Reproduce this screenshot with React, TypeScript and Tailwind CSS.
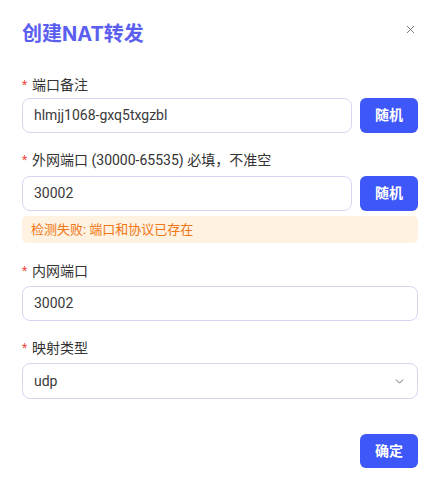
import { X, ChevronDown } from 'lucide-react';

const font = { fontFamily: 'Roboto, "Noto Sans CJK SC", sans-serif' };

function Label({ text }: { text: string }) {
  return (
    <div className="flex items-center h-[22px] text-[14px] leading-[22px] text-[#333]">
      <span className="text-[#f5483b] text-[12px] mr-[4px] w-[6px]">*</span>
      {text}
    </div>
  );
}

function Field({ value }: { value: string }) {
  return (
    <div className="flex-1 h-[35px] flex items-center px-[11px] rounded-[8px] border border-[#dcd3f2] text-[14px] text-[#3a3a3a] bg-white">
      {value}
    </div>
  );
}

function RandomButton() {
  return (
    <button className="w-[58px] h-[35px] rounded-[6px] bg-[#3d57f8] text-white text-[14px] font-bold">
      随机
    </button>
  );
}

export default function App() {
  return (
    <div className="w-[438px] h-[500px] bg-white pl-[22px] pr-[20px]" style={font}>
      <div className="flex justify-between pt-[20px] h-[48px]">
        <h1 className="text-[20px] font-bold leading-[28px] text-[#5b5ff0] font-['Inter','Noto_Sans_CJK_SC',sans-serif]">
          创建NAT转发
        </h1>
        <X className="w-[13px] h-[13px] text-[#666] mt-[3px] mr-[1px]" strokeWidth={1.6} />
      </div>

      <div className="mt-[26px]">
        <Label text="端口备注" />
        <div className="flex gap-[8px] mt-[2px]">
          <Field value="hlmjj1068-gxq5txgzbl" />
          <RandomButton />
        </div>
      </div>

      <div className="mt-[16px]">
        <Label text="外网端口 (30000-65535) 必填，不准空" />
        <div className="flex gap-[8px] mt-[5px]">
          <Field value="30002" />
          <RandomButton />
        </div>
        <div className="mt-[5px] h-[27px] rounded-[5px] bg-[#fff2e0] text-[#f07515] text-[13px] flex items-center px-[9px]">
          检测失败: 端口和协议已存在
        </div>
      </div>

      <div className="mt-[17px]">
        <Label text="内网端口" />
        <div className="flex mt-[4px]">
          <Field value="30002" />
        </div>
      </div>

      <div className="mt-[16px]">
        <Label text="映射类型" />
        <div className="mt-[4px] h-[36px] flex items-center justify-between px-[11px] rounded-[8px] border border-[#dcd3f2] text-[14px] text-[#3a3a3a]">
          <span>udp</span>
          <ChevronDown className="w-[13px] h-[13px] text-[#555]" strokeWidth={1.6} />
        </div>
      </div>

      <div className="flex justify-end mt-[35px]">
        <button className="w-[58px] h-[34px] rounded-[6px] bg-[#3d57f8] text-white text-[14px] font-bold">
          确定
        </button>
      </div>
    </div>
  );
}
